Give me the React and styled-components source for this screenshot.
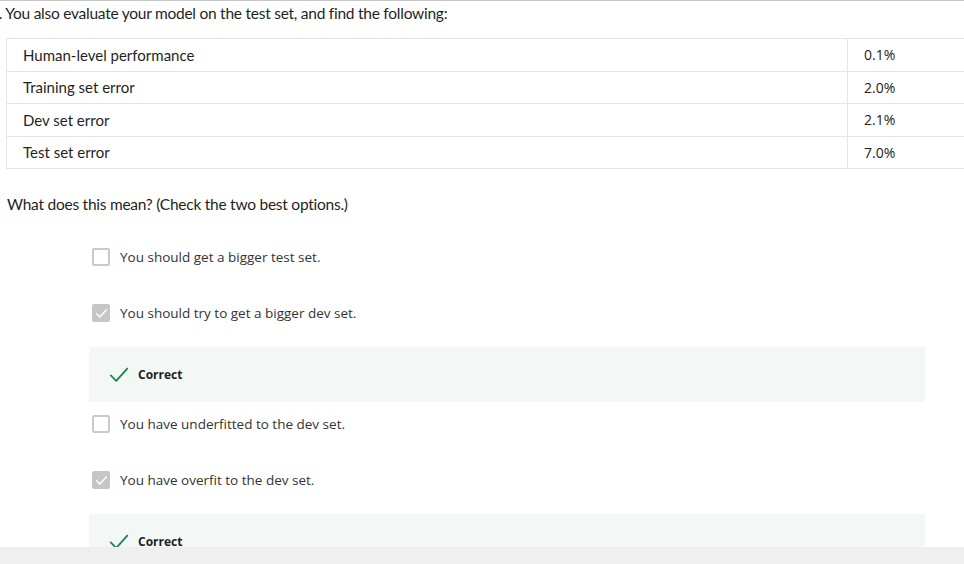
import React from 'react'
import styled, { createGlobalStyle } from 'styled-components'

const Global = createGlobalStyle`
  html, body {
    margin: 0;
    padding: 0;
    background: #fff;
    overflow: hidden;
  }
`

const Page = styled.div`
  height: 564px;
  display: flex;
  flex-direction: column;
  overflow: hidden;
`

const Content = styled.div`
  flex: 1;
  overflow: hidden;
  border-top: 1px solid #c6c6c6;
  color: #1f1f1f;
  font-family: "Source Sans Pro", Lato, "Noto Sans", sans-serif;
`

const Prompt = styled.div`
  font-size: 15.5px;
  letter-spacing: -0.25px;
  line-height: 20px;
  padding-top: 2px;
  white-space: nowrap;
`

const Num = styled.span`
  margin-left: -10px;
`

const Table = styled.div`
  margin: 15px 0 0 6px;
  width: 1000px;
  border-top: 1px solid #e4e4e4;
  border-left: 1px solid #e4e4e4;
`

const Row = styled.div`
  display: grid;
  grid-template-columns: 841px 1fr;
  height: 31.5px;
  border-bottom: 1px solid #e4e4e4;
  align-items: stretch;
`

const Label = styled.div`
  display: flex;
  align-items: center;
  padding-left: 16px;
  font-size: 15px;
  border-right: 1px solid #e4e4e4;
`

const Value = styled.div`
  display: flex;
  align-items: center;
  padding-left: 16px;
  font-family: "Open Sans", "Noto Sans", sans-serif;
  font-size: 14px;
  color: #222;
`

const Question = styled.div`
  margin: 25px 0 0 7px;
  font-size: 15.5px;
  letter-spacing: -0.25px;
  line-height: 20px;
`

const Options = styled.div`
  padding: 29px 39px 0 89px;
  display: flex;
  flex-direction: column;
`

const Option = styled.label`
  display: flex;
  align-items: center;
  gap: 10px;
  height: 20px;
  margin: 4px 0 32px 3px;
  font-family: "Open Sans", "Noto Sans", sans-serif;
  font-size: 13.5px;
  color: #333;
`

const Box = styled.span`
  box-sizing: border-box;
  width: 18px;
  height: 18px;
  border-radius: 2px;
  border: 2px solid ${({ $checked }) => ($checked ? '#c6c6c6' : '#c9c9c9')};
  background: ${({ $checked }) => ($checked ? '#c6c6c6' : '#fff')};
  display: flex;
  align-items: center;
  justify-content: center;
`

const Feedback = styled.div`
  height: 55px;
  background: #f3f8f6;
  display: flex;
  align-items: center;
  gap: 8px;
  padding-left: 19px;
  margin: -8px 0 8px 0;
  font-family: "Open Sans", "Noto Sans", sans-serif;
  font-size: 12px;
  font-weight: 700;
  color: #1f1f1f;
`

const Bar = styled.div`
  height: 17px;
  background: #efefef;
`

const rows = [
  ['Human-level performance', '0.1%'],
  ['Training set error', '2.0%'],
  ['Dev set error', '2.1%'],
  ['Test set error', '7.0%'],
]

const options = [
  { text: 'You should get a bigger test set.', checked: false },
  { text: 'You should try to get a bigger dev set.', checked: true },
  { text: 'You have underfitted to the dev set.', checked: false },
  { text: 'You have overfit to the dev set.', checked: true },
]

const Tick = ({ size = 12, color = '#fff', width = 2 }) => (
  <svg width={size} height={size} viewBox="0 0 24 24" fill="none" stroke={color} strokeWidth={width} strokeLinecap="round" strokeLinejoin="round">
    <polyline points="3 12.5 9 18.5 21 5" />
  </svg>
)

export default function App() {
  return (
    <Page>
      <Global />
      <Content>
        <Prompt><Num>4.</Num> You also evaluate your model on the test set, and find the following:</Prompt>
        <Table>
          {rows.map(([k, v]) => (
            <Row key={k}>
              <Label>{k}</Label>
              <Value>{v}</Value>
            </Row>
          ))}
        </Table>
        <Question>What does this mean? (Check the two best options.)</Question>
        <Options>
          {options.map((o) => (
            <React.Fragment key={o.text}>
              <Option>
                <Box $checked={o.checked}>{o.checked && <Tick size={13} width={2.6} />}</Box>
                {o.text}
              </Option>
              {o.checked && (
                <Feedback>
                  <Tick size={22} color="#1e8553" width={2} />
                  Correct
                </Feedback>
              )}
            </React.Fragment>
          ))}
        </Options>
      </Content>
      <Bar />
    </Page>
  )
}
